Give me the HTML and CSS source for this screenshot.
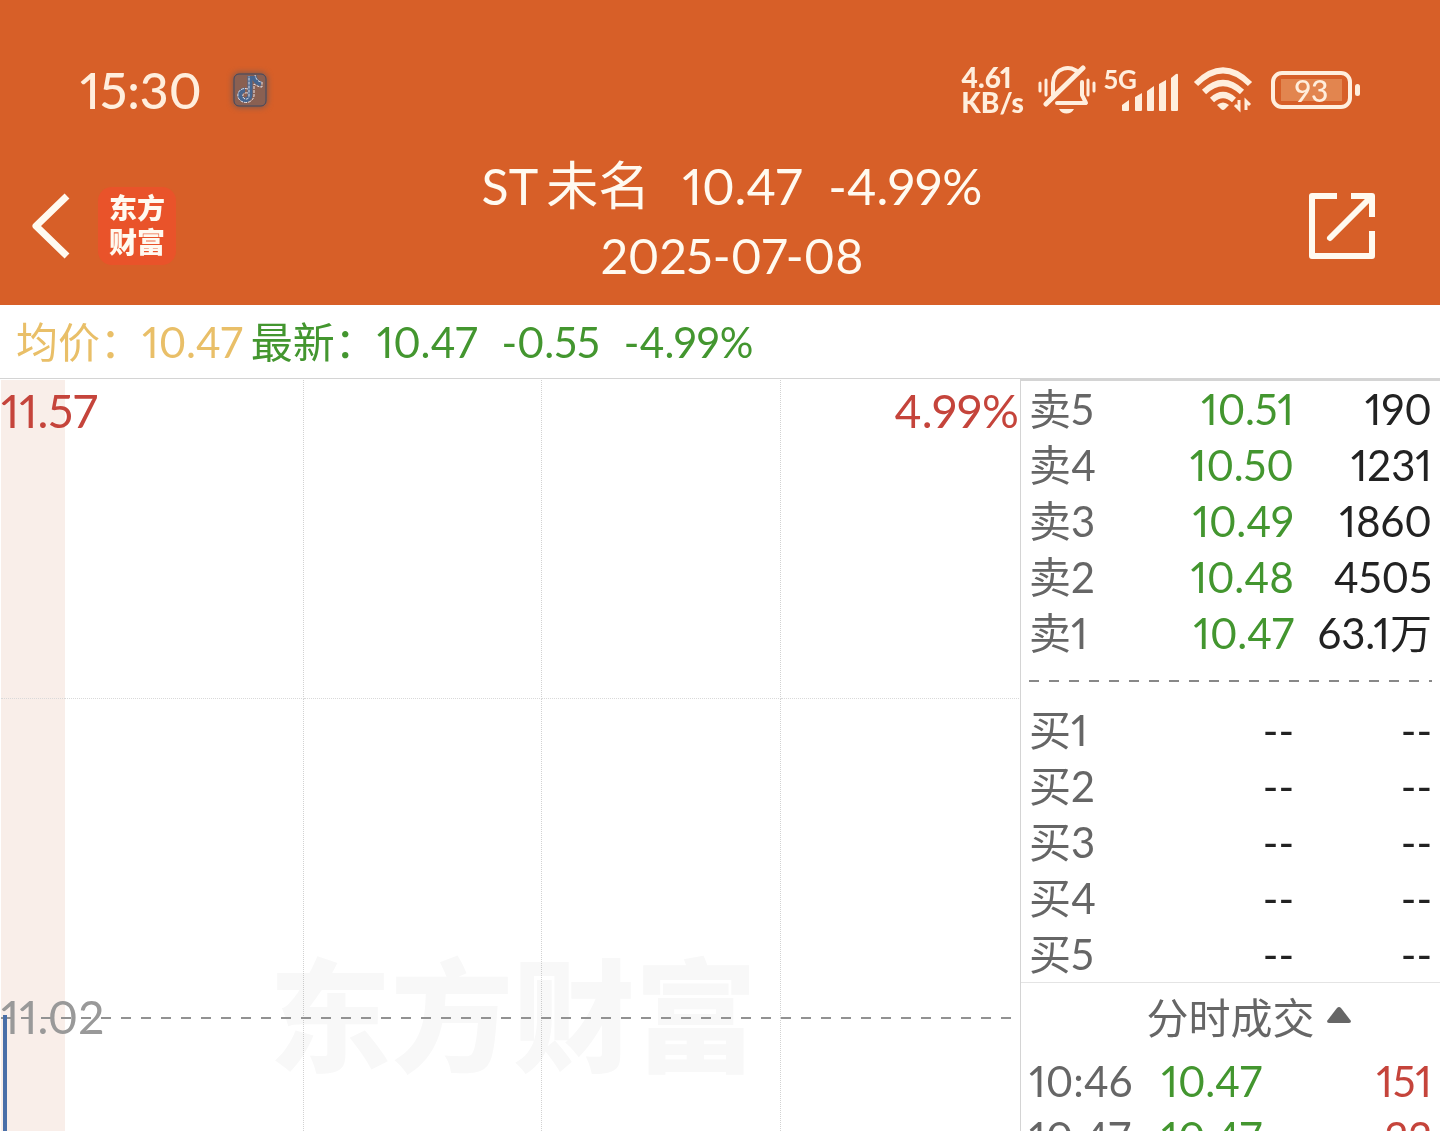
FILE: index.html
```html
<!DOCTYPE html>
<html lang="zh-CN">
<head>
    <meta charset="UTF-8">
    <meta name="viewport" content="width=device-width, initial-scale=1.0">
    <title>ST未名 分时</title>
    <link rel="stylesheet" href="styles.css">
</head>
<body>
    <header class="header">
        <div class="status-bar">
            <span class="clock">15:30</span>
            <svg class="app-dot" width="48" height="48" viewBox="0 0 48 48">
                <rect class="app-glow" x="7" y="7" width="34" height="34" rx="6"/>
                <rect x="8" y="8" width="32" height="32" rx="5" fill="#8a6052" stroke="#3f4861" stroke-width="1"/>
                <path d="M24 10v19a5 5 0 1 1-5-5M28 10c1 5 3 7 7 8" fill="none" stroke="#46658f" stroke-width="5"/>
                <path d="M22 23c-7-2-11 3-10 8 2 7 14 8 16-1V18c3 2 5 3 8 3v-5c-4 0-6-3-7-7M22 27c-4-1-6 2-5 4 1 3 6 3 6-1V10" fill="none" stroke="#e9e4e8" stroke-width="1" stroke-dasharray="3 1"/>
            </svg>
            <div class="status-icons">
                <span class="net-speed">4.61<br>KB/s</span>
                <svg class="bell" width="58" height="50" viewBox="0 0 58 50" fill="none" stroke="#ffeedd" stroke-width="4" stroke-linecap="round">
                    <path d="M2 18v8M8 15v15M50 15v15M56 18v8" stroke-width="3"/>
                    <path d="M15 30V18C16 2 34-1 40 8M44 17v13l4 8H19" stroke-linejoin="round"/>
                    <path d="M8 39L45 3" stroke-width="5"/>
                    <path d="M21 44h15c-3 6-12 6-15 0z" fill="#ffeedd" stroke="none"/>
                </svg>
                <div class="signal">
                    <span class="net-type">5G</span>
                    <svg width="58" height="38" viewBox="0 0 58 38" fill="#ffeedd">
                        <path d="M1 37v-5l7-5v10q0 1-1 1H2q-1 0-1-1zM14 37V24l7-4v17q0 1-1 1h-5q-1 0-1-1zM26 37V18l7-5v24q0 1-1 1h-5q-1 0-1-1zM38 37V11l7-4v30q0 1-1 1h-5q-1 0-1-1zM50 37V5l5-4q2-1 2 1v35q0 1-1 1h-5q-1 0-1-1z"/>
                    </svg>
                </div>
                <svg class="wifi" width="60" height="46" viewBox="0 0 60 46" fill="none" stroke="#ffeedd" stroke-width="6">
                    <path d="M3 17Q30-10 57 17M11 25q19-18 38 0M19 33q11-10 22 0"/>
                    <path d="M24 38q6-5 12 0l-4 4q-2 2-4 0z" fill="#ffeedd" stroke="none"/>
                    <path d="M46 33v9l-4-4M53 43v-9l4 4" stroke-width="3"/>
                </svg>
                <div class="battery"><span class="battery-level">93</span></div>
            </div>
        </div>
        <div class="nav-bar">
            <div class="nav-left">
                <button class="icon-button" aria-label="返回">
                    <svg width="40" height="66" viewBox="0 0 40 66" fill="none" stroke="#fffaf0" stroke-width="7" stroke-linejoin="round">
                        <path d="M37 3L6 33L37 63"/>
                    </svg>
                </button>
                <a class="brand" href="#">东方<br>财富</a>
            </div>
            <div class="title">
                <h1><span>ST</span><span class="name">未名</span><span>10.47</span><span class="percent">-4.99%</span></h1>
                <p>2025-07-08</p>
            </div>
            <button class="icon-button share" aria-label="分享">
                <svg width="68" height="68" viewBox="0 0 68 68" fill="none" stroke="#fffaf0" stroke-width="6" stroke-linejoin="round">
                    <path d="M29 4H4v60h60V39M43 4h21v21"/>
                    <path d="M22 46L62 6" stroke-linecap="round"/>
                </svg>
            </button>
        </div>
    </header>

    <div class="summary">
        <span class="avg">均价：<span>10.47</span></span>
        <span class="green">最新：<span>10.47</span></span>
        <span class="green change">-0.55</span>
        <span class="green change">-4.99%</span>
    </div>

    <main class="main">
        <section class="chart">
            <div class="plot">
                <div class="auction"></div>
                <div class="cell"></div>
                <div class="cell"></div>
                <div class="cell"></div>
                <div class="cell"></div>
                <div class="auction"></div>
                <div class="cell"></div>
                <div class="cell"></div>
                <div class="cell"></div>
                <div class="cell"></div>
                <div class="auction"></div>
                <div class="cell"></div>
                <div class="cell"></div>
                <div class="cell"></div>
                <div class="cell"></div>
            </div>
            <div class="watermark">东方财富</div>
            <div class="base-line"></div>
            <div class="price-line"></div>
            <span class="label high">11.57</span>
            <span class="label high-percent">4.99%</span>
            <span class="label base">11.02</span>
        </section>

        <aside class="quotes">
            <table class="book sell">
                <tr><th>卖5</th><td class="green">10.51</td><td>190</td></tr>
                <tr><th>卖4</th><td class="green">10.50</td><td>1231</td></tr>
                <tr><th>卖3</th><td class="green">10.49</td><td>1860</td></tr>
                <tr><th>卖2</th><td class="green">10.48</td><td>4505</td></tr>
                <tr><th>卖1</th><td class="green">10.47</td><td>63.1万</td></tr>
            </table>
            <div class="divider"></div>
            <table class="book buy">
                <tr><th>买1</th><td>--</td><td>--</td></tr>
                <tr><th>买2</th><td>--</td><td>--</td></tr>
                <tr><th>买3</th><td>--</td><td>--</td></tr>
                <tr><th>买4</th><td>--</td><td>--</td></tr>
                <tr><th>买5</th><td>--</td><td>--</td></tr>
            </table>
            <button class="ticks-title">分时成交
                <svg width="24" height="16" viewBox="0 0 24 16"><path d="M10 1q2-2 4 0l10 13q0 2-2 2H2q-2 0-2-2z" fill="#666"/></svg>
            </button>
            <table class="book ticks">
                <tr><th>10:46</th><td class="green">10.47</td><td class="red">151</td></tr>
                <tr><th>10:47</th><td class="green">10.47</td><td class="red">22</td></tr>
            </table>
        </aside>
    </main>
</body>
</html>
```

FILE: styles.css
```css
* {
    box-sizing: border-box;
}
body {
    margin: 0;
    height: 100vh;
    display: flex;
    flex-direction: column;
    overflow: hidden;
    background: #fff;
    color: #222;
    font-family: Lato, "Noto Sans CJK SC", sans-serif;
    font-size: 42px;
    font-variant-numeric: proportional-nums;
}
button {
    padding: 0;
    border: none;
    background: none;
    font: inherit;
    cursor: pointer;
}
svg {
    display: block;
}
.green {
    color: #43962f;
}
.red {
    color: #c5443b;
}

/* header */
.header {
    flex: none;
    height: 305px;
    padding-top: 60px;
    background: #d75f28;
    color: #fffaf0;
}
.status-bar {
    display: flex;
    align-items: center;
    height: 60px;
    padding: 0 88px 0 80px;
    color: #ffeedd;
}
.clock {
    font-size: 50px;
    font-weight: 500;
}
.app-dot {
    margin-left: 24px;
}
.app-glow {
    fill: #6b5a58;
    filter: blur(3px);
}
.status-icons {
    display: flex;
    align-items: center;
    margin-left: auto;
}
.net-speed {
    font-size: 28px;
    font-weight: 900;
    line-height: 25px;
}
.bell {
    margin-left: 14px;
}
.signal {
    display: flex;
    margin-left: 8px;
}
.signal svg {
    margin: 4px 0 0 -16px;
}
.net-type {
    font-size: 26px;
    font-weight: 700;
    line-height: 20px;
}
.wifi {
    margin-left: 14px;
}
.battery {
    position: relative;
    width: 81px;
    height: 38px;
    margin-left: 18px;
    padding: 4px 6px;
    border: 4px solid #ffeedd;
    border-radius: 11px;
}
.battery::after {
    content: "";
    position: absolute;
    top: 9px;
    right: -12px;
    width: 5px;
    height: 12px;
    border-radius: 3px;
    background: #ffeedd;
}
.battery-level {
    display: block;
    background: #e2854f;
    font-size: 30px;
    font-weight: 500;
    line-height: 22px;
    text-align: center;
}
.nav-bar {
    display: grid;
    grid-template-columns: 1fr auto 1fr;
    align-items: center;
    height: 185px;
    padding: 26px 64px 0 30px;
}
.nav-left {
    display: flex;
    align-items: center;
    gap: 28px;
}
.brand {
    width: 78px;
    height: 78px;
    padding-top: 4px;
    border-radius: 14px;
    background: #e9532a;
    color: #fffaf0;
    font-size: 28px;
    font-weight: 900;
    line-height: 34px;
    text-align: center;
    text-decoration: none;
}
.title {
    margin-bottom: 10px;
    padding-left: 58px;
    text-align: center;
}
.title h1 {
    display: flex;
    align-items: baseline;
    justify-content: center;
    margin: 0;
    font-size: 50px;
    font-weight: 400;
    line-height: 70px;
}
.title .name {
    margin: 0 32px 0 8px;
    font-size: 52px;
}
.title .percent {
    margin-left: 26px;
}
.title p {
    margin: 0;
    font-size: 48px;
    line-height: 70px;
}
.share {
    justify-self: end;
}

/* price summary */
.summary {
    flex: none;
    display: flex;
    align-items: baseline;
    height: 74px;
    padding: 0 16px;
    border-bottom: 1px solid #d4d4d4;
    line-height: 74px;
}
.avg {
    margin-right: 8px;
    color: #e9bf68;
}
.change {
    margin-left: 24px;
}

.main {
    flex: 1;
    min-height: 0;
    display: flex;
}

/* intraday chart */
.chart {
    position: relative;
    flex: 1;
    overflow: hidden;
}
.plot {
    display: grid;
    grid-template-columns: 64px repeat(4, 1fr);
    grid-auto-rows: 319px;
    padding: 1px;
}
.auction {
    background: #f9eee9;
}
.cell {
    border-right: 1px dotted #d2d2d2;
}
.cell:nth-child(5n) {
    border-right: none;
}
.cell:nth-child(-n+5), .auction:first-child {
    border-bottom: 1px dotted #d9d9d9;
}
.watermark {
    position: absolute;
    top: 548px;
    left: 0;
    right: 0;
    padding-left: 6px;
    color: #f8f8f8;
    font-size: 122px;
    font-weight: 900;
    line-height: 176px;
    text-align: center;
    mix-blend-mode: multiply;
}
.base-line {
    position: absolute;
    top: 638px;
    left: 1px;
    right: 8px;
    height: 2px;
    background: repeating-linear-gradient(to right, #929292 0 10px, transparent 10px 20px);
}
.price-line {
    position: absolute;
    top: 636px;
    bottom: 0;
    left: 3px;
    width: 4px;
    background: #4a6fa8;
}
.label {
    position: absolute;
    font-size: 46px;
    line-height: 56px;
}
.high {
    top: 4px;
    left: 1px;
    color: #c5443b;
}
.high-percent {
    top: 4px;
    right: 1px;
    color: #c5443b;
}
.base {
    top: 610px;
    left: 1px;
    color: #999;
}

/* order book */
.quotes {
    flex: none;
    width: 420px;
    border-top: 2px solid #d4d4d4;
    border-left: 1px solid #d4d4d4;
}
.book {
    width: 100%;
    border-collapse: collapse;
    table-layout: fixed;
    line-height: 56px;
}
.book th, .book td {
    height: 56px;
    padding: 0;
    text-align: right;
    white-space: nowrap;
}
.book th {
    width: 100px;
    padding-left: 8px;
    color: #666;
    font-weight: 400;
    text-align: left;
}
.book td:last-child {
    width: 146px;
    padding-right: 8px;
}
.divider {
    height: 2px;
    margin: 19px 8px 20px;
    background: repeating-linear-gradient(to right, #888 0 10px, transparent 10px 20px);
}
.buy {
    border-bottom: 1px solid #e4e4e4;
}
.ticks-title {
    display: flex;
    align-items: center;
    justify-content: center;
    gap: 12px;
    width: 100%;
    height: 70px;
    padding: 0 0 6px 36px;
    color: #666;
}
.ticks th {
    width: 120px;
}
.ticks td:last-child {
    width: 178px;
}
```
